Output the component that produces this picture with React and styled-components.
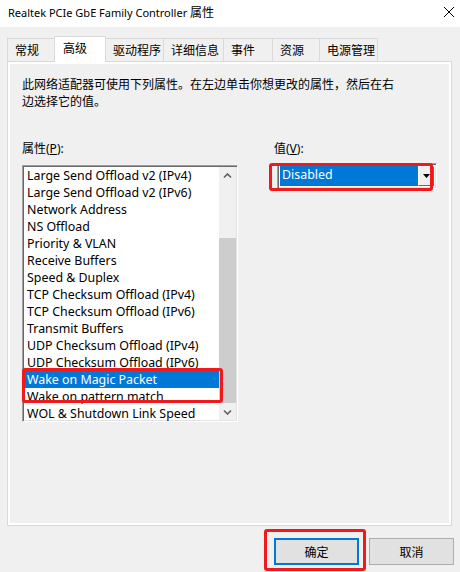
import React from 'react'
import styled, {createGlobalStyle} from 'styled-components'

const Global = createGlobalStyle`
  html, body {
    margin: 0;
    padding: 0;
    background: #f0f0f0;
  }
  * {
    box-sizing: border-box;
  }
  body {
    font-family: "Noto Sans", "Noto Sans CJK SC", sans-serif;
    font-size: 12px;
    color: #000;
  }
`

const Window = styled.div`
  width: 460px;
  height: 572px;
  background: #f0f0f0;
  display: flex;
  flex-direction: column;
  overflow: hidden;
`

const TitleBar = styled.div`
  height: 27px;
  background: #fff;
  display: flex;
  align-items: center;
  justify-content: space-between;
  padding: 0 5px 3px 8px;
  font-size: 11px;
  span b {
    font-weight: normal;
    font-size: 12px;
  }
`

const Tabs = styled.div`
  display: flex;
  align-items: flex-end;
  height: 25px;
  margin-top: 9px;
  padding-left: 7px;
  position: relative;
  z-index: 2;
`

const Tab = styled.div`
  width: ${p => p.$w}px;
  height: ${p => (p.$active ? 26 : 23)}px;
  margin-left: -1px;
  margin-bottom: ${p => (p.$active ? -1 : 0)}px;
  padding: 0 0 ${p => (p.$active ? 3 : 0)}px ${p => (p.$active ? 8 : 7)}px;
  border: 1px solid #d9d9d9;
  border-bottom: none;
  background: ${p => (p.$active ? '#fff' : '#f0f0f0')};
  position: relative;
  z-index: ${p => (p.$active ? 2 : 1)};
  display: flex;
  align-items: center;
  white-space: nowrap;
  &:first-child {
    margin-left: 0;
  }
`

const Panel = styled.div`
  height: 465px;
  margin: 0 8px 0 7px;
  border: 1px solid #d9d9d9;
  padding: 2px;
  background: #fff;
`

const PanelInner = styled.div`
  height: 100%;
  background: #f0f0f0;
  padding: 12px 12px 0 12px;
`

const Description = styled.div`
  width: 380px;
  line-height: 17px;
`

const Columns = styled.div`
  display: flex;
  margin-top: 30px;
  gap: 36px;
`

const Column = styled.div`
  display: flex;
  flex-direction: column;
  width: ${p => p.$w}px;
`

const Label = styled.div`
  height: 17px;
  line-height: 17px;
  margin-bottom: ${p => p.$gap}px;
  u {
    text-underline-offset: 1px;
  }
`

const Annotated = styled.div`
  position: relative;
`

const RedBox = styled.div`
  position: absolute;
  left: ${p => p.$x}px;
  top: ${p => p.$y}px;
  width: ${p => p.$w}px;
  height: ${p => p.$h}px;
  border: 3px solid #f2191c;
  border-radius: 3px;
  pointer-events: none;
  z-index: 5;
`

const ListBox = styled.div`
  width: 216px;
  height: 257px;
  border: 1px solid;
  border-color: #a0a0a0 #fff #fff #a0a0a0;
  box-shadow: inset 1px 1px #696969, inset -1px -1px #e3e3e3;
  padding: 1px;
  background: #fff;
  display: flex;
  overflow: hidden;
`

const Items = styled.div`
  flex: 1;
  display: flex;
  flex-direction: column;
`

const Item = styled.div`
  height: 17px;
  line-height: 17px;
  flex-shrink: 0;
  padding-left: 3px;
  font-size: 12.4px;
  white-space: nowrap;
  background: ${p => (p.$selected ? '#0078d7' : 'transparent')};
  color: ${p => (p.$selected ? '#fff' : '#000')};
`

const ScrollBar = styled.div`
  width: 17px;
  background: #f0f0f0;
  display: flex;
  flex-direction: column;
`

const ArrowBtn = styled.div`
  height: 17px;
  display: flex;
  align-items: center;
  justify-content: center;
`

const Track = styled.div`
  flex: 1;
  display: flex;
  flex-direction: column;
`

const Thumb = styled.div`
  margin-top: ${p => p.$top}px;
  height: ${p => p.$h}px;
  background: #cdcdcd;
`

const Combo = styled.div`
  width: 160px;
  height: 26px;
  margin-left: 3px;
  border: 1px solid;
  border-color: #a0a0a0 #fff #fff #a0a0a0;
  box-shadow: inset 1px 1px #696969, inset -1px -1px #e3e3e3;
  padding: 2px;
  background: #fff;
  display: flex;
`

const ComboValue = styled.div`
  flex: 1;
  background: #0078d7;
  color: #fff;
  padding-left: 2px;
  font-size: 12.4px;
  line-height: 18px;
`

const DropButton = styled.div`
  width: 16px;
  background: #f0f0f0;
  border: 1px solid;
  border-color: #fff #696969 #696969 #fff;
  display: flex;
  align-items: center;
  justify-content: center;
`

const Footer = styled.div`
  display: flex;
  justify-content: flex-end;
  gap: 10px;
  padding: 12px 6px 0 0;
`

const Button = styled.button`
  width: 85px;
  height: 27px;
  font-family: inherit;
  font-size: 12px;
  color: #000;
  background: #e1e1e1;
  border: ${p => (p.$default ? '2px solid #0078d7' : '1px solid #adadad')};
  padding: 0;
  display: flex;
  align-items: center;
  justify-content: center;
`

const tabs = [
  ['常规', 48],
  ['高级', 52],
  ['驱动程序', 59],
  ['详细信息', 61],
  ['事件', 50],
  ['资源', 48],
  ['电源管理', 59]
]

const properties = [
  'Large Send Offload v2 (IPv4)',
  'Large Send Offload v2 (IPv6)',
  'Network Address',
  'NS Offload',
  'Priority & VLAN',
  'Receive Buffers',
  'Speed & Duplex',
  'TCP Checksum Offload (IPv4)',
  'TCP Checksum Offload (IPv6)',
  'Transmit Buffers',
  'UDP Checksum Offload (IPv4)',
  'UDP Checksum Offload (IPv6)',
  'Wake on Magic Packet',
  'Wake on pattern match',
  'WOL & Shutdown Link Speed'
]

const Chevron = ({down}) => (
  <svg width='9' height='6' viewBox='0 0 9 6'>
    <path
      d={down ? 'M1 1.5 L4.5 5 L8 1.5' : 'M1 4.5 L4.5 1 L8 4.5'}
      fill='none'
      stroke='#606060'
      strokeWidth='1.6'
    />
  </svg>
)

export default function App() {
  return (
    <Window>
      <Global />
      <TitleBar>
        <span>Realtek PCIe GbE Family Controller <b>属性</b></span>
        <svg width='12' height='12' viewBox='0 0 12 12'>
          <path d='M1 1 L11 11 M11 1 L1 11' stroke='#000' strokeWidth='1' />
        </svg>
      </TitleBar>

      <Tabs>
        {tabs.map(([name, w]) => (
          <Tab key={name} $w={w} $active={name === '高级'}>{name}</Tab>
        ))}
      </Tabs>

      <Panel>
        <PanelInner>
          <Description>
            此网络适配器可使用下列属性。在左边单击你想更改的属性，然后在右边选择它的值。
          </Description>

          <Columns>
            <Column $w={216}>
              <Label $gap={8}>属性(<u>P</u>):</Label>
              <Annotated>
                <ListBox>
                  <Items>
                    {properties.map(p => (
                      <Item key={p} $selected={p === 'Wake on Magic Packet'}>{p}</Item>
                    ))}
                  </Items>
                  <ScrollBar>
                    <ArrowBtn><Chevron /></ArrowBtn>
                    <Track>
                      <Thumb $top={54} $h={165} />
                    </Track>
                    <ArrowBtn><Chevron down /></ArrowBtn>
                  </ScrollBar>
                </ListBox>
                <RedBox $x={0} $y={203} $w={201} $h={35} />
              </Annotated>
            </Column>

            <Column $w={166}>
              <Label $gap={6}>值(<u>V</u>):</Label>
              <Annotated>
                <Combo>
                  <ComboValue>Disabled</ComboValue>
                  <DropButton>
                    <svg width='7' height='4' viewBox='0 0 7 4'>
                      <path d='M0 0 L7 0 L3.5 4 Z' fill='#000' />
                    </svg>
                  </DropButton>
                </Combo>
                <RedBox $x={-5} $y={0} $w={164} $h={28} />
              </Annotated>
            </Column>
          </Columns>
        </PanelInner>
      </Panel>

      <Footer>
        <Annotated>
          <Button $default>确定</Button>
          <RedBox $x={-10} $y={-9} $w={102} $h={42} />
        </Annotated>
        <Button>取消</Button>
      </Footer>
    </Window>
  )
}
